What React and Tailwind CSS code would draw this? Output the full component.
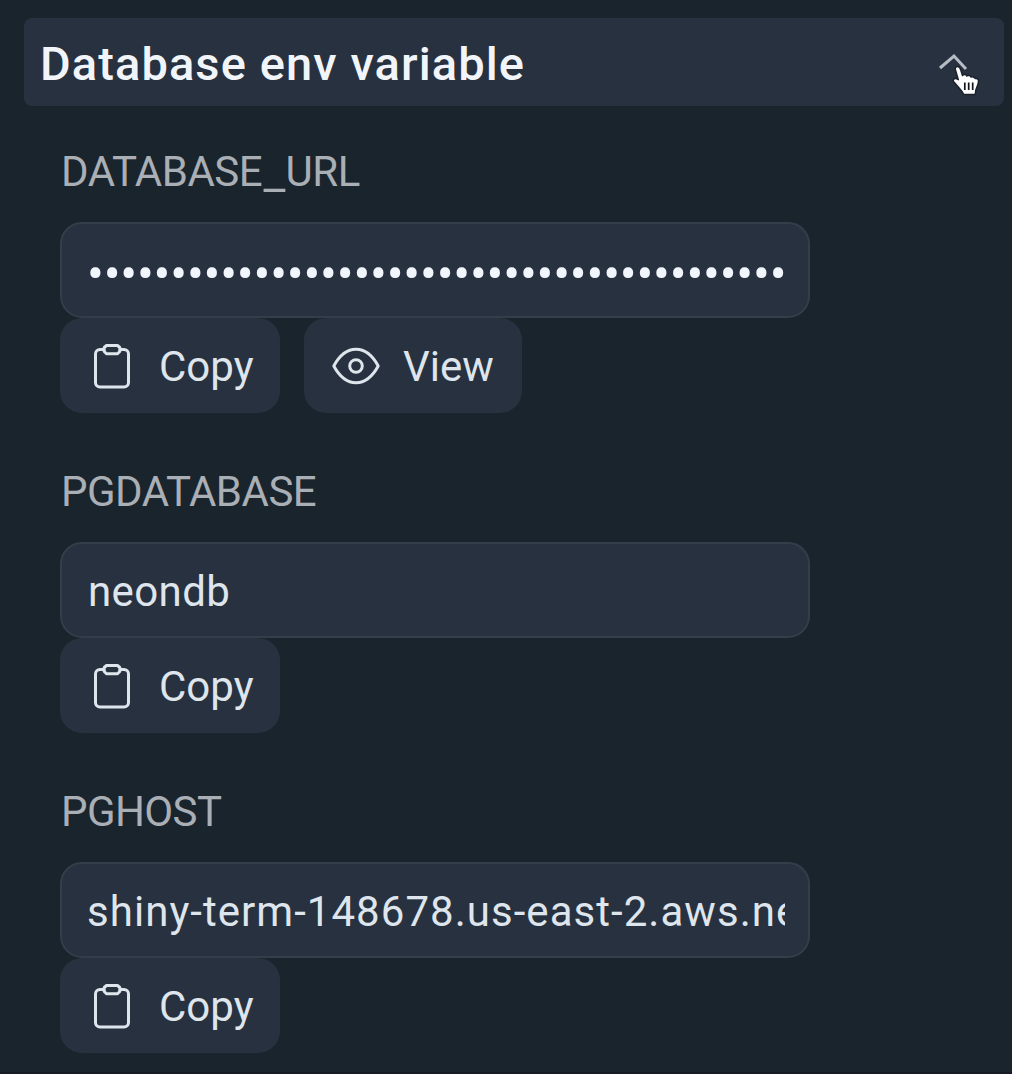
const FONT = "font-['Roboto','Noto_Sans',sans-serif]";

function ClipboardIcon() {
  return (
    <svg className="h-12 w-12 shrink-0" viewBox="0 0 48 48" fill="none" stroke="currentColor" strokeWidth="3" strokeLinejoin="round">
      <path d="M16 7.500H12A4.500 4.500 0 0 0 7.500 12V40.500A4.500 4.500 0 0 0 12 45H36A4.500 4.500 0 0 0 40.500 40.500V12A4.500 4.500 0 0 0 36 7.500H32" />
      <path d="M18.500 3.500H29.500L31.800 5.500V9.500L29.500 11.800H18.500L16.200 9.500V5.500Z" />
    </svg>
  );
}

function EyeIcon() {
  return (
    <svg className="h-12 w-12 shrink-0" viewBox="0 0 48 48" fill="none" stroke="currentColor" strokeWidth="3" strokeLinejoin="round">
      <path d="M1.800 24C7.500 13.500 15 7.300 24 7.300S40.500 13.500 46.200 24C40.500 34.500 33 40.700 24 40.700S7.500 34.500 1.800 24z" />
      <circle cx="24" cy="24" r="6.300" />
    </svg>
  );
}

function HandCursor() {
  return (
    <svg className="absolute top-[64px] left-[949px] h-[34px] w-8" viewBox="0 0 32 34" strokeLinejoin="round">
      <path
        d="M8.500 2.500c2 0 2.800 1.500 3.300 3.500l1.700 5.500c.8-1.300 3.600-1.300 4.300.5 1.100-1 3.600-.8 4.200 1 1.500-.8 3.600.2 4.200 1.500 2-.5 3.500 1 3.300 3-.3 3.500-1.800 6-2.800 9l-.4 4H14.500c-.5-3-3-4.500-4.800-7L4.500 17.500c-1-1.700.6-3.700 3-2.800l1.800 1L6.300 5.500c-.4-1.600.7-3 2.200-3z"
        fill="#fff" stroke="#1b222b" strokeWidth="1.500"
      />
      <path d="M15.800 18.500v7.500M19.700 18.500v7.500M23.700 18.500v7.500" stroke="#10161c" strokeWidth="1.700" />
    </svg>
  );
}

function ActionButton({ icon, children, className }) {
  return (
    <button className={`flex h-[95px] items-center rounded-[22px] bg-[#28313f] pl-7 text-[42px] text-[#dfe5ec] ${className}`}>
      {icon}
      <span className="ml-[23px] pt-0.5">{children}</span>
    </button>
  );
}

function Field({ label, labelClass, value, valueClass, secret }) {
  return (
    <section className="h-80">
      <div className={`h-[76px] pl-px text-[42px] leading-[52px] whitespace-nowrap text-[#a9afb5] ${labelClass}`}>{label}</div>
      <div className="flex h-24 w-[750px] items-center rounded-[22px] border-2 border-[#343e4b] bg-[#28313f] pr-[23px] pl-[25px]">
        <div className={`w-full overflow-hidden whitespace-nowrap ${valueClass}`}>{value}</div>
      </div>
      <div className="flex gap-6">
        <ActionButton className="w-[220px]" icon={<ClipboardIcon />}>Copy</ActionButton>
        {secret && <ActionButton className="w-[218px]" icon={<EyeIcon />}>View</ActionButton>}
      </div>
    </section>
  );
}

const databaseUrlLabel = (
  <>
    DATABASE<span className="mr-0.5 ml-[3px] inline-block translate-y-[3px] scale-x-115">_</span>URL
  </>
);

export default function App() {
  return (
    <main className={`relative h-[1074px] w-[1012px] overflow-hidden border-b-2 border-[#161c26] bg-[#1a242d] pt-[18px] pl-6 ${FONT}`}>
      <header className="flex h-22 w-[980px] items-center justify-between rounded-lg bg-[#28313f] pr-9 pl-4">
        <h1 className="pt-1 text-[47px] font-medium tracking-[1.1px] text-[#f1f5f9]">Database env variable</h1>
        <svg className="h-5 w-[30px]" viewBox="0 0 30 20" fill="none" stroke="#b6bcc6" strokeWidth="3">
          <path d="M2 16 16 4l12 13" />
        </svg>
      </header>
      <div className="pt-10 pl-9">
        <Field secret label={databaseUrlLabel} labelClass="tracking-[-0.5px]" value={"•".repeat(42)} valueClass="pt-2 text-[50px] tracking-[-0.22px] text-[#f1f6fc]" />
        <Field label="PGDATABASE" labelClass="tracking-[-0.5px]" value="neondb" valueClass="pt-[3px] pl-px text-[42px] tracking-[0.4px] text-[#dfe5ec]" />
        <Field label="PGHOST" labelClass="tracking-[-0.6px]" value="shiny-term-148678.us-east-2.aws.neon" valueClass="pt-[3px] text-[42px] tracking-[1.04px] text-[#dfe5ec]" />
      </div>
      <HandCursor />
    </main>
  );
}
